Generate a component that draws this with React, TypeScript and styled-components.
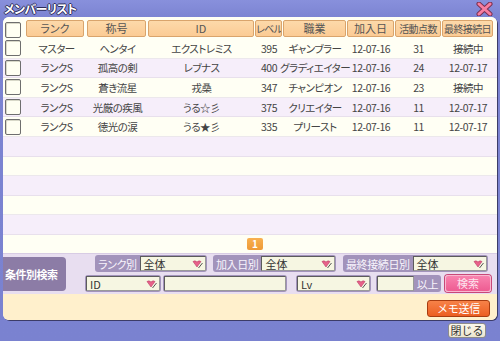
import React from "react";
import styled, { createGlobalStyle } from "styled-components";

const GlobalStyle = createGlobalStyle`
  html, body {
    margin: 0;
    padding: 0;
    background: #7c84d2;
  }
  body {
    font-family: "Noto Sans CJK JP", "Noto Sans", sans-serif;
    font-feature-settings: "palt";
  }
`;

const Window = styled.div`
  width: 500px;
  height: 341px;
  background: linear-gradient(#8890dc, #7c84d2 17px, #7a82d0);
  display: flex;
  flex-direction: column;
  overflow: hidden;
`;

const TitleBar = styled.div`
  height: 17px;
  display: flex;
  align-items: center;
  justify-content: space-between;
  padding: 0 7px 0 4px;
`;

const Title = styled.div`
  color: #fff;
  font-size: 12px;
  font-weight: bold;
  letter-spacing: -0.6px;
  text-shadow: 1px 0 0 #2c2c58, -1px 0 0 #2c2c58, 0 1px 0 #2c2c58,
    0 -1px 0 #2c2c58;
`;

const Panel = styled.div`
  margin: 0 3px;
  height: 303px;
  background: #fffff4;
  border-radius: 6px;
  box-shadow: 1px 1px 0 #3c3c68;
  overflow: hidden;
  display: flex;
  flex-direction: column;
`;

const columns = "23px 61px 61px 107px 28px 64px 48px 47px 52px";

const HeaderRow = styled.div`
  display: grid;
  grid-template-columns: ${columns};
  height: 22px;
  padding-top: 3px;
  box-sizing: border-box;
  background: #fffff4;
`;

const HeaderCell = styled.div<{ $space?: number; $tight?: boolean }>`
  height: 17px;
  margin-right: ${(p) => p.$space ?? 1}px;
  background: linear-gradient(#fdd9aa, #fbcb94);
  border: 1px solid #d9a46c;
  border-radius: 2px;
  box-sizing: border-box;
  color: #555;
  font-size: ${(p) => (p.$tight ? "10px" : "11px")};
  line-height: 15px;
  text-align: center;
  white-space: nowrap;
  overflow: hidden;
  letter-spacing: ${(p) => (p.$tight ? "-0.6px" : "0")};
`;

const CheckCell = styled.div`
  padding-left: 2px;
  display: flex;
  align-items: center;
`;

const Check = styled.div`
  width: 16px;
  height: 16px;
  box-sizing: border-box;
  border: 1px solid #6e6e6e;
  border-radius: 2px;
  background: #fffff2;
  box-shadow: inset 1px 1px 0 #d8d8c8;
`;

const List = styled.div`
  display: flex;
  flex-direction: column;
`;

const Row = styled.div<{ $alt: boolean }>`
  display: grid;
  grid-template-columns: ${columns};
  height: 19.6px;
  box-sizing: border-box;
  border-bottom: 1px solid ${(p) => (p.$alt ? "#e8e0ec" : "#ece8ec")};
  background: ${(p) => (p.$alt ? "#f6eefa" : "#fffff4")};
`;

const Cell = styled.div`
  display: flex;
  align-items: center;
  justify-content: center;
  color: #444;
  font-size: 10.5px;
  white-space: nowrap;
  letter-spacing: -0.5px;
`;

const Pager = styled.div`
  height: 18px;
  display: flex;
  align-items: center;
  justify-content: center;
  padding-left: 10px;
  background: #fffff4;
`;

const PageButton = styled.div`
  width: 16px;
  height: 12px;
  background: linear-gradient(#f8b050, #ee9a36);
  border-radius: 2px;
  color: #fff;
  font-size: 10px;
  font-weight: bold;
  line-height: 12px;
  text-align: center;
`;

const SearchArea = styled.div`
  height: 41px;
  background: #e8def0;
  display: flex;
  align-items: center;
  border-top: 1px solid #d8cce4;
  box-sizing: border-box;
`;

const SearchLabel = styled.div`
  width: 63px;
  height: 34px;
  background: #8c7ca6;
  border-radius: 0 4px 4px 0;
  color: #fff;
  font-size: 11px;
  font-weight: bold;
  display: flex;
  align-items: center;
  padding-left: 2px;
  box-sizing: border-box;
  letter-spacing: -0.5px;
  white-space: nowrap;
`;

const Filters = styled.div`
  margin-left: 19px;
  display: flex;
  flex-direction: column;
  gap: 3px;
`;

const FilterRow = styled.div<{ $indent: number }>`
  display: flex;
  align-items: center;
  padding-left: ${(p) => p.$indent}px;
`;

const Group = styled.div<{ $width: number; $gap?: number }>`
  width: ${(p) => p.$width}px;
  margin-left: ${(p) => p.$gap ?? 0}px;
  height: 17px;
  box-sizing: border-box;
  padding: 1px;
  background: #a293bb;
  border-radius: 3px;
  display: flex;
  align-items: center;
  gap: 1px;
`;

const GroupLabel = styled.span`
  color: #f8f4fc;
  font-size: 11px;
  padding: 0 2px;
  white-space: nowrap;
  letter-spacing: -0.4px;
`;

const Field = styled.div`
  flex: 1;
  height: 15px;
  box-sizing: border-box;
  background: #f6f6e2;
  border: 1px solid #5c5c5c;
  border-right-color: #9a9a9a;
  border-bottom-color: #9a9a9a;
  display: flex;
  align-items: center;
  justify-content: space-between;
  padding: 0 2px 0 3px;
  color: #333;
  font-size: 11px;
  white-space: nowrap;
`;

const SearchButton = styled.button`
  margin-left: 4px;
  width: 46px;
  height: 17px;
  padding: 0;
  background: linear-gradient(#f882ae, #ee5c92);
  border: 1px solid #f8b8d0;
  border-radius: 3px;
  box-shadow: 0 0 0 1px #c84878;
  color: #fde4ee;
  font-family: inherit;
  font-size: 11px;
  line-height: 15px;
`;

const Footer = styled.div`
  flex: 1;
  background: #fff0cc;
  display: flex;
  justify-content: flex-end;
  align-items: flex-start;
  padding: 6px 7px 0 0;
`;

const MemoButton = styled.button`
  width: 63px;
  height: 17px;
  padding: 0;
  background: linear-gradient(#f78248, #ec5e22);
  border: 1px solid #a83c10;
  border-radius: 3px;
  color: #fff;
  font-family: inherit;
  font-size: 11px;
  line-height: 15px;
  letter-spacing: -0.3px;
`;

const BottomBar = styled.div`
  flex: 1;
  display: flex;
  justify-content: flex-end;
  align-items: flex-start;
  padding: 3px 14px 0 0;
`;

const CloseButton = styled.button`
  width: 38px;
  height: 15px;
  padding: 0;
  background: linear-gradient(#fbf8ec, #ece6d0);
  border: 1px solid #8c8c8c;
  border-radius: 3px;
  color: #333;
  font-family: inherit;
  font-size: 11px;
  line-height: 13px;
`;

const Arrow = () => (
  <svg width="11" height="10" viewBox="0 0 11 10">
    <path d="M1 2.5 Q3 1 5 3 Q7 1 9 2.5 L5 8 Z" fill="#e8628a" stroke="#b84068" strokeWidth="0.6" />
    <path d="M6.5 9 L10.5 4" stroke="#555" strokeWidth="1" />
  </svg>
);

const CloseX = () => (
  <svg width="17" height="14" viewBox="0 0 17 14">
    <path d="M3 2 L14 12 M14 2 L3 12" stroke="#7a3050" strokeWidth="5" strokeLinecap="round" />
    <path d="M3 2 L14 12 M14 2 L3 12" stroke="#f87ea0" strokeWidth="3" strokeLinecap="round" />
  </svg>
);

const headers = [
  { label: "ランク", space: 3 },
  { label: "称号", space: 2 },
  { label: "ID" },
  { label: "レベル", tight: true },
  { label: "職業" },
  { label: "加入日" },
  { label: "活動点数", tight: true },
  { label: "最終接続日", tight: true },
];

const members = [
  ["マスター", "ヘンタイ", "エクストレミス", "395", "ギャンブラー", "12-07-16", "31", "接続中"],
  ["ランクS", "孤高の剣", "レブナス", "400", "グラディエイター", "12-07-16", "24", "12-07-17"],
  ["ランクS", "蒼き流星", "戎桑", "347", "チャンピオン", "12-07-16", "23", "接続中"],
  ["ランクS", "光厳の疾風", "うる☆彡", "375", "クリエイター", "12-07-16", "11", "12-07-17"],
  ["ランクS", "徳光の涙", "うる★彡", "335", "プリースト", "12-07-16", "11", "12-07-17"],
];

const ROWS = 10;

export default function App() {
  return (
    <>
      <GlobalStyle />
      <Window>
        <TitleBar>
          <Title>メンバーリスト</Title>
          <CloseX />
        </TitleBar>
        <Panel>
          <HeaderRow>
            <CheckCell>
              <Check />
            </CheckCell>
            {headers.map((h) => (
              <HeaderCell key={h.label} $space={h.space} $tight={h.tight}>
                {h.label}
              </HeaderCell>
            ))}
          </HeaderRow>
          <List>
            {Array.from({ length: ROWS }).map((_, i) => {
              const m = members[i];
              return (
                <Row key={i} $alt={i % 2 === 1}>
                  {m && (
                    <>
                      <CheckCell>
                        <Check />
                      </CheckCell>
                      {m.map((v, j) => (
                        <Cell key={j}>{v}</Cell>
                      ))}
                    </>
                  )}
                </Row>
              );
            })}
          </List>
          <Pager>
            <PageButton>1</PageButton>
          </Pager>
          <SearchArea>
            <SearchLabel>条件別検索</SearchLabel>
            <Filters>
              <FilterRow $indent={10}>
                <Group $width={112}>
                  <GroupLabel>ランク別</GroupLabel>
                  <Field>
                    全体
                    <Arrow />
                  </Field>
                </Group>
                <Group $width={123} $gap={6}>
                  <GroupLabel>加入日別</GroupLabel>
                  <Field>
                    全体
                    <Arrow />
                  </Field>
                </Group>
                <Group $width={145} $gap={7}>
                  <GroupLabel>最終接続日別</GroupLabel>
                  <Field>
                    全体
                    <Arrow />
                  </Field>
                </Group>
              </FilterRow>
              <FilterRow $indent={0}>
                <Group $width={76}>
                  <Field>
                    ID
                    <Arrow />
                  </Field>
                </Group>
                <Group $width={124} $gap={2}>
                  <Field />
                </Group>
                <Group $width={75} $gap={9}>
                  <Field>
                    Lv
                    <Arrow />
                  </Field>
                </Group>
                <Group $width={65} $gap={5}>
                  <Field />
                  <GroupLabel>以上</GroupLabel>
                </Group>
                <SearchButton>検索</SearchButton>
              </FilterRow>
            </Filters>
          </SearchArea>
          <Footer>
            <MemoButton>メモ送信</MemoButton>
          </Footer>
        </Panel>
        <BottomBar>
          <CloseButton>閉じる</CloseButton>
        </BottomBar>
      </Window>
    </>
  );
}
